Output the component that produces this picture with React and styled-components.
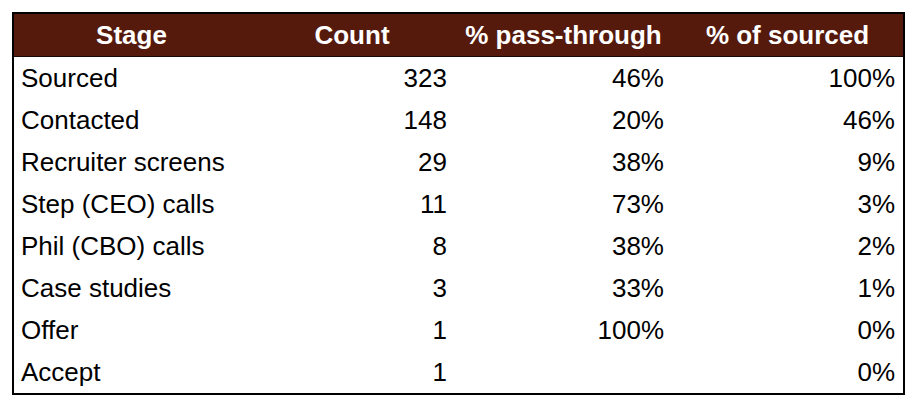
import React from 'react'
import styled, { createGlobalStyle } from 'styled-components'

const GlobalStyle = createGlobalStyle`
  body {
    margin: 0;
    background: #fff;
    font-family: 'Liberation Sans', Arial, sans-serif;
  }
`

const rows = [
  { stage: 'Sourced', count: 323, pass: '46%', sourced: '100%' },
  { stage: 'Contacted', count: 148, pass: '20%', sourced: '46%' },
  { stage: 'Recruiter screens', count: 29, pass: '38%', sourced: '9%' },
  { stage: 'Step (CEO) calls', count: 11, pass: '73%', sourced: '3%' },
  { stage: 'Phil (CBO) calls', count: 8, pass: '38%', sourced: '2%' },
  { stage: 'Case studies', count: 3, pass: '33%', sourced: '1%' },
  { stage: 'Offer', count: 1, pass: '100%', sourced: '0%' },
  { stage: 'Accept', count: 1, pass: '', sourced: '0%' },
]

const App = () => {
  return (
    <Wrapper>
      <GlobalStyle />
      <Table>
        <colgroup>
          <col style={{ width: 236 }} />
          <col style={{ width: 206 }} />
          <col style={{ width: 217 }} />
          <col />
        </colgroup>
        <thead>
          <tr>
            <Head>Stage</Head>
            <Head>Count</Head>
            <Head>% pass-through</Head>
            <Head>% of sourced</Head>
          </tr>
        </thead>
        <tbody>
          {rows.map((row) => (
            <tr key={row.stage}>
              <Cell>{row.stage}</Cell>
              <Cell $num>{row.count}</Cell>
              <Cell $num>{row.pass}</Cell>
              <Cell $num>{row.sourced}</Cell>
            </tr>
          ))}
        </tbody>
      </Table>
    </Wrapper>
  )
}

const Wrapper = styled.div`
  padding: 12px;
`

const Table = styled.table`
  width: 893px;
  border: 2px solid #000;
  border-collapse: collapse;
  table-layout: fixed;
  font-size: 26px;
  color: #000;
`

const Head = styled.th`
  height: 42px;
  padding: 0 8px;
  background: #551a0c;
  color: #fff;
  font-weight: 700;
  text-align: center;
  border-bottom: 1px solid #1a0804;
`

const Cell = styled.td`
  height: 42px;
  padding: 0 8px 0 7px;
  text-align: ${(p) => (p.$num ? 'right' : 'left')};
  white-space: nowrap;
`

export default App
